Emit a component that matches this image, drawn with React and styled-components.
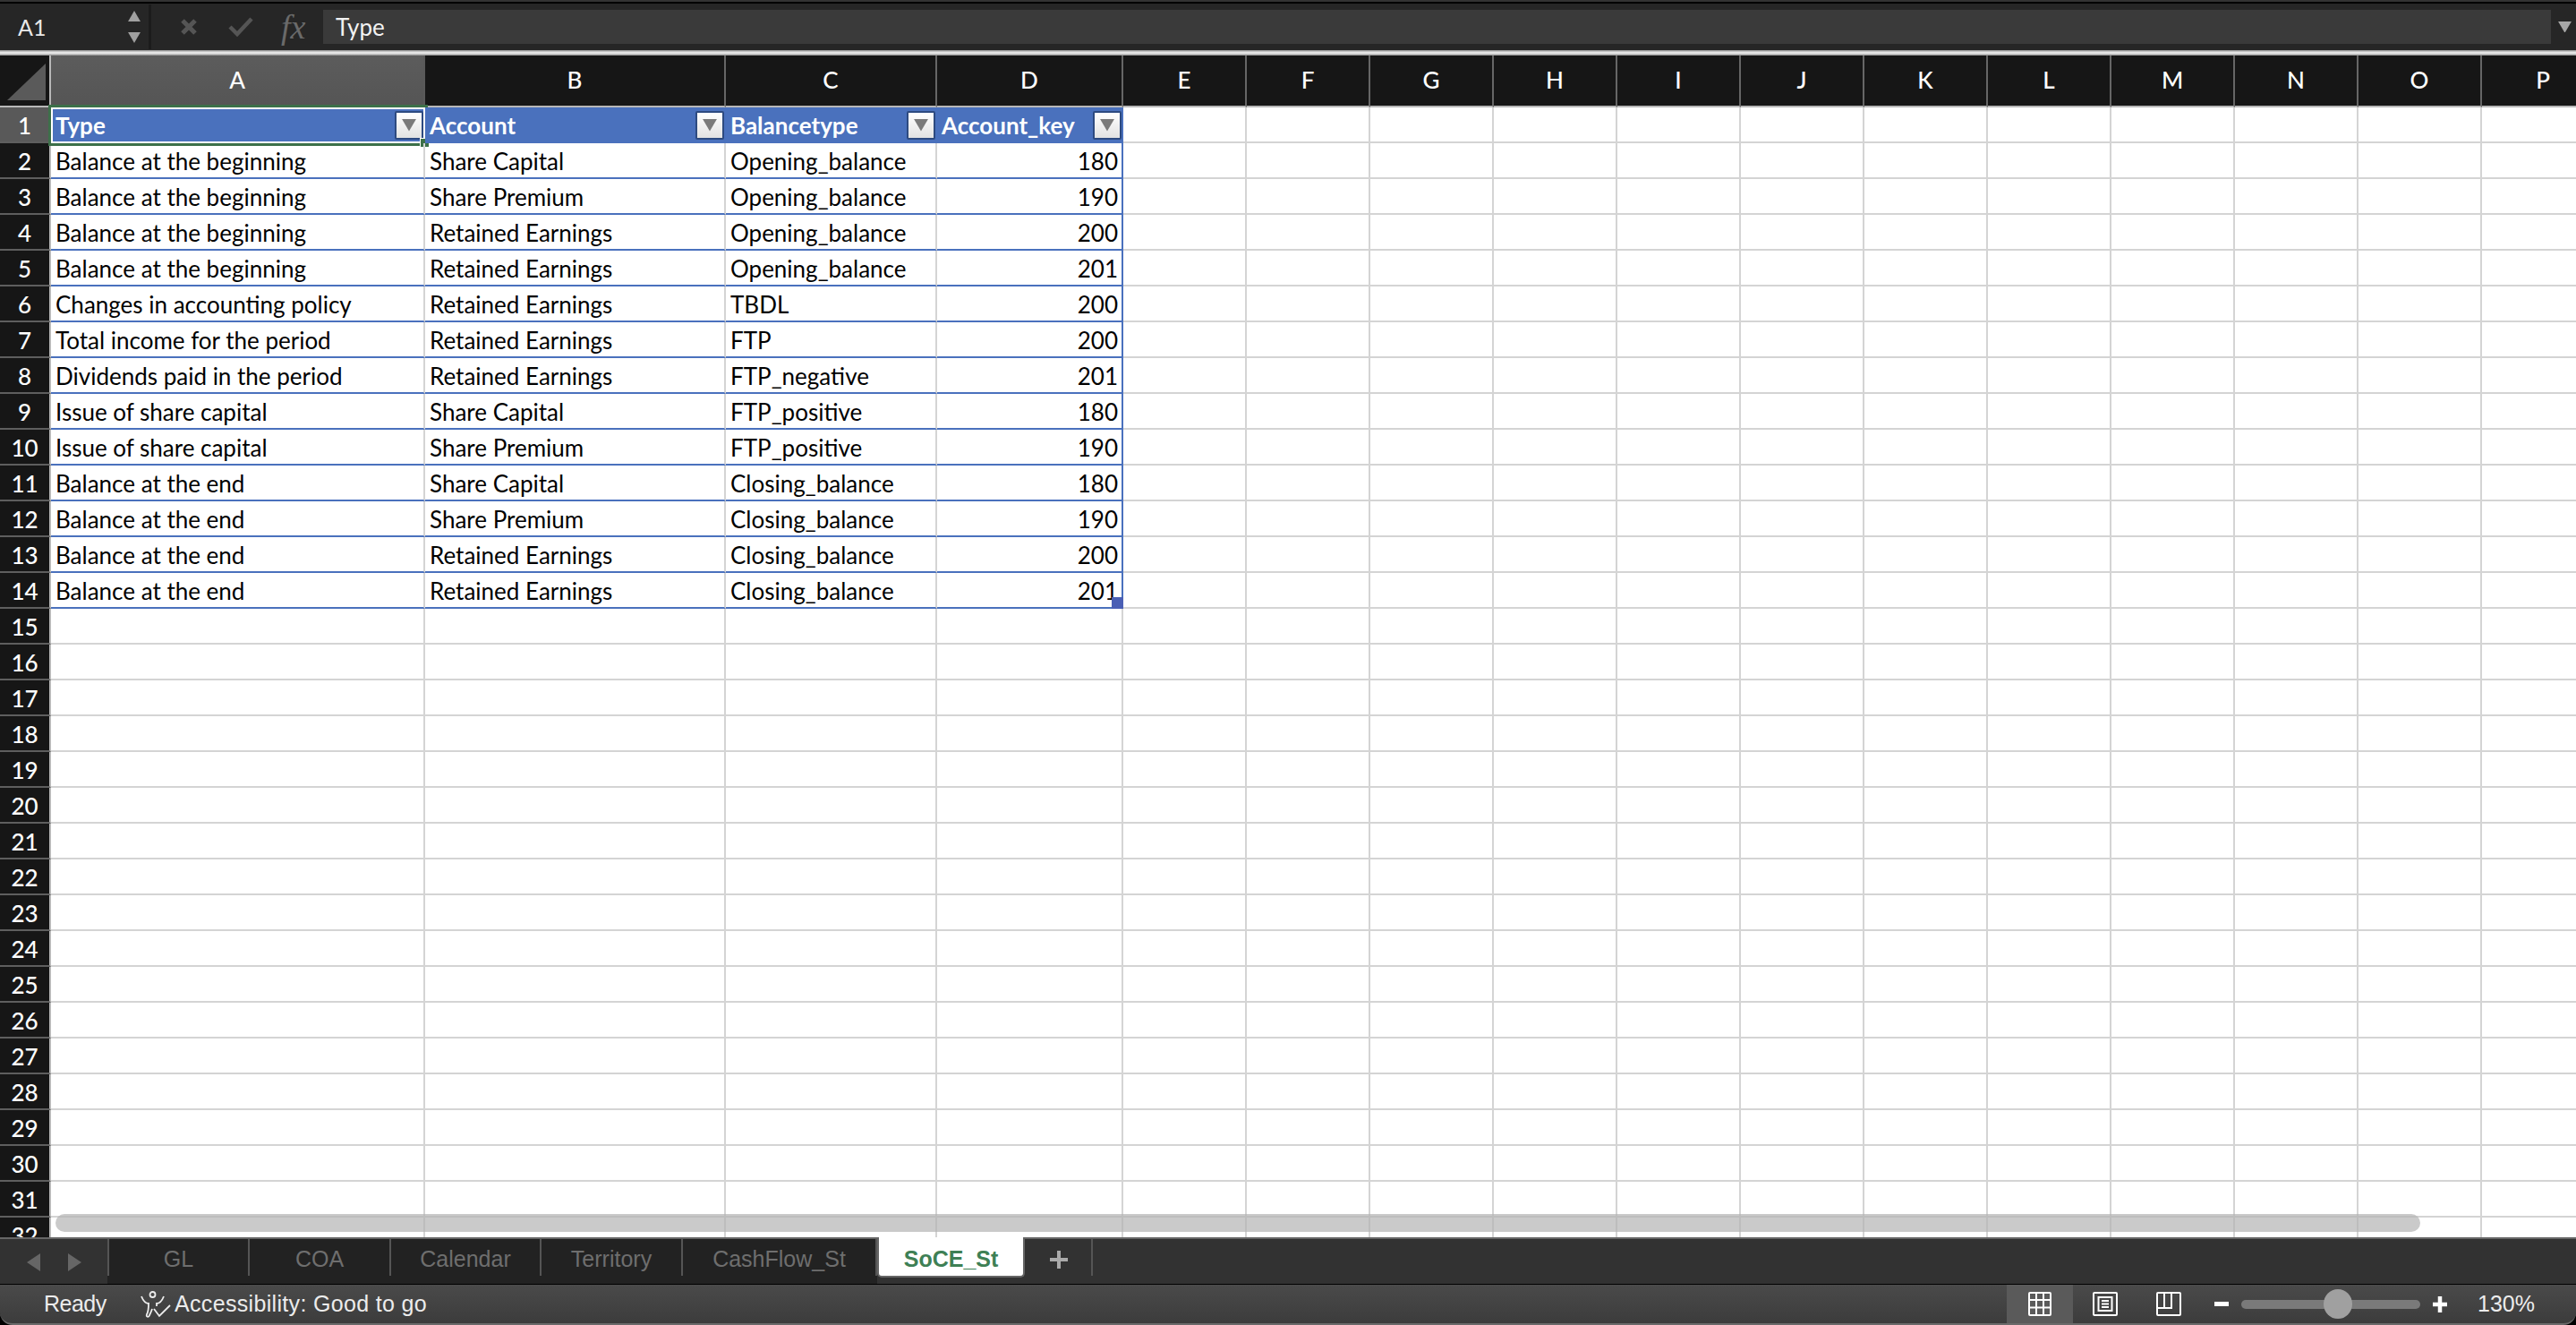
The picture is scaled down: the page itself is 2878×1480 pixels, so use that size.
import React from "react";
import styled, { createGlobalStyle } from "styled-components";

const GlobalStyle = createGlobalStyle`
  html, body {
    margin: 0;
    padding: 0;
    background: #000;
    overflow: hidden;
  }
`;

const COLUMNS = ["A", "B", "C", "D", "E", "F", "G", "H", "I", "J", "K", "L", "M", "N", "O", "P"];
const HEADERS = ["Type", "Account", "Balancetype", "Account_key"];
const ROWS = [
  ["Balance at the beginning", "Share Capital", "Opening_balance", 180],
  ["Balance at the beginning", "Share Premium", "Opening_balance", 190],
  ["Balance at the beginning", "Retained Earnings", "Opening_balance", 200],
  ["Balance at the beginning", "Retained Earnings", "Opening_balance", 201],
  ["Changes in accounting policy", "Retained Earnings", "TBDL", 200],
  ["Total income for the period", "Retained Earnings", "FTP", 200],
  ["Dividends paid in the period", "Retained Earnings", "FTP_negative", 201],
  ["Issue of share capital", "Share Capital", "FTP_positive", 180],
  ["Issue of share capital", "Share Premium", "FTP_positive", 190],
  ["Balance at the end", "Share Capital", "Closing_balance", 180],
  ["Balance at the end", "Share Premium", "Closing_balance", 190],
  ["Balance at the end", "Retained Earnings", "Closing_balance", 200],
  ["Balance at the end", "Retained Earnings", "Closing_balance", 201],
];
const TABS = [
  { name: "GL", width: 159 },
  { name: "COA", width: 158 },
  { name: "Calendar", width: 168 },
  { name: "Territory", width: 158 },
  { name: "CashFlow_St", width: 217 },
];

const Window = styled.div`
  width: 2878px;
  height: 1480px;
  display: flex;
  flex-direction: column;
  background: #000;
  overflow: hidden;
  border-top: 2px solid #333;
  box-sizing: border-box;
`;

/* formula bar */
const FormulaBar = styled.div`
  height: 52px;
  margin-top: 2px;
  display: flex;
  align-items: center;
  background: #262626;
  flex-shrink: 0;
`;
const NameBox = styled.div`
  width: 169px;
  height: 50px;
  box-sizing: border-box;
  padding: 0 9px 0 20px;
  display: flex;
  align-items: center;
  justify-content: space-between;
  color: #e8e8e8;
  font-family: "Lato", sans-serif;
  font-size: 25px;
  border-right: 3px solid #1c1c1c;
`;
const Stepper = styled.div`
  display: flex;
  flex-direction: column;
  gap: 12px;
`;
const FormulaButtons = styled.div`
  width: 192px;
  padding-left: 32px;
  box-sizing: border-box;
  display: flex;
  align-items: center;
  gap: 34px;
`;
const FxLabel = styled.span`
  font-family: "Liberation Serif", serif;
  font-style: italic;
  font-size: 38px;
  color: #6a6a6a;
  margin-left: -3px;
`;
const FormulaInput = styled.div`
  width: 2489px;
  height: 38px;
  padding-left: 14px;
  box-sizing: border-box;
  display: flex;
  align-items: center;
  background: #3a3a3a;
  color: #f2f2f2;
  font-family: "Lato", sans-serif;
  font-size: 26px;
`;
const FormulaChevron = styled.div`
  margin-left: 8px;
  display: flex;
`;
const Splitter = styled.div`
  height: 6px;
  flex-shrink: 0;
  background: linear-gradient(#8c8c8c, #e4e4e4 40%, #e4e4e4 60%, #8c8c8c);
`;

/* sheet */
const Sheet = styled.div`
  position: relative;
  flex: 1;
  min-height: 0;
  overflow: hidden;
  background: #fff;
`;
const Grid = styled.div`
  display: grid;
  grid-template-columns: 57px 418px 336px 236px 208px repeat(12, 138px);
  grid-template-rows: 58px;
  grid-auto-rows: 40px;
  width: 2911px;
  font-family: "Lato", sans-serif;
  font-size: 26px;
  color: #000;
`;
const Corner = styled.div`
  box-sizing: border-box;
  padding: 8px 4px 5px 8px;
  background: #161616;
  border-right: 2px solid #b8b8b8;
  border-bottom: 2px solid #b8b8b8;
  display: flex;
`;
const ColumnHeader = styled.div`
  box-sizing: border-box;
  display: flex;
  align-items: center;
  justify-content: center;
  padding-bottom: 2px;
  color: #fff;
  font-size: 26px;
  font-weight: 500;
  background: ${(p) => (p.$active ? "linear-gradient(#5c5c5c, #555)" : "#161616")};
  border-right: 2px solid ${(p) => (p.$active ? "#595959" : "#666")};
  border-bottom: 2px solid #b8b8b8;
`;
const RowHeader = styled.div`
  box-sizing: border-box;
  display: flex;
  align-items: center;
  justify-content: center;
  padding-top: 2px;
  color: #fff;
  font-size: 26px;
  font-weight: 500;
  background: ${(p) => (p.$active ? "#595959" : "#161616")};
  border-bottom: 2px solid #5e5e5e;
  border-right: 2px solid #b8b8b8;
`;
const Cell = styled.div`
  position: relative;
  box-sizing: border-box;
  min-width: 0;
  display: flex;
  align-items: center;
  justify-content: ${(p) => (p.$number ? "flex-end" : "flex-start")};
  padding: 2px 4px 0 5px;
  white-space: nowrap;
  border-right: 2px solid ${(p) => (p.$edge ? "#4a71bd" : "#d4d4d4")};
  border-bottom: 2px solid ${(p) => (p.$table ? "#4a71bd" : "#d4d4d4")};
`;
const HeaderCell = styled.div`
  position: relative;
  box-sizing: border-box;
  min-width: 0;
  display: flex;
  align-items: center;
  justify-content: space-between;
  padding: 0 2px 0 5px;
  white-space: nowrap;
  background: #4a71bd;
  color: #fff;
  font-weight: 700;
`;
const FilterButton = styled.div`
  width: 32px;
  height: 32px;
  box-sizing: border-box;
  display: flex;
  align-items: center;
  justify-content: center;
  border: 2px solid #2d4a80;
  border-radius: 2px;
  background: linear-gradient(#fff, #e2e2e2);
`;
const Selection = styled.div`
  position: absolute;
  left: -3px;
  top: -3px;
  right: -3px;
  bottom: -3px;
  border: 3px solid #3c7049;
  box-shadow: inset 0 0 0 2px #fff;
  pointer-events: none;
`;
const SelectionHandle = styled.div`
  position: absolute;
  right: -5px;
  bottom: -5px;
  width: 11px;
  height: 11px;
  background: #3c7049;
  border: 1px solid #fff;
  box-sizing: border-box;
`;
const TableHandle = styled.div`
  position: absolute;
  right: -2px;
  bottom: -2px;
  width: 13px;
  height: 13px;
  background: #4a5fb5;
`;
const ScrollThumb = styled.div`
  position: absolute;
  left: 62px;
  top: 1294px;
  width: 2642px;
  height: 20px;
  border-radius: 10px;
  background: rgba(180, 180, 180, 0.7);
`;

/* sheet tabs */
const TabBar = styled.div`
  height: 50px;
  flex-shrink: 0;
  display: flex;
  border-top: 2px solid #666;
  border-bottom: 1px solid #000;
  background: #323232;
  font-family: "Liberation Sans", sans-serif;
  font-size: 25px;
`;
const TabNav = styled.div`
  width: 120px;
  padding-top: 16px;
  height: 34px;
  display: flex;
  justify-content: center;
  gap: 31px;
`;
const TabList = styled.div`
  display: flex;
  background: #222;
`;
const Tab = styled.div`
  width: ${(p) => p.$width}px;
  height: 41px;
  box-sizing: border-box;
  padding-top: 3px;
  display: flex;
  align-items: center;
  justify-content: center;
  color: #6e6e6e;
  border-right: 2px solid #555;
  &:first-child {
    border-left: 2px solid #555;
  }
`;
const ActiveTab = styled.div`
  width: 165px;
  height: 45px;
  margin-top: -2px;
  box-sizing: border-box;
  padding-top: 5px;
  display: flex;
  align-items: center;
  justify-content: center;
  background: #fff;
  color: #3e8055;
  font-weight: 700;
  border: 2px solid #666;
  border-top: 0;
  border-radius: 0 0 5px 5px;
`;
const AddTab = styled.div`
  width: 76px;
  height: 41px;
  box-sizing: border-box;
  padding: 4px 0 0 2px;
  display: flex;
  align-items: center;
  justify-content: center;
  border-right: 2px solid #555;
`;

/* status bar */
const StatusBar = styled.div`
  height: 45px;
  flex-shrink: 0;
  box-sizing: border-box;
  display: flex;
  align-items: center;
  background: linear-gradient(#4a4a4a, #3c3c3c);
  border-bottom: 2px solid #6a6a6a;
  border-radius: 0 0 14px 14px;
  color: #ececec;
  font-family: "Liberation Sans", sans-serif;
  font-size: 25px;
`;
const ReadyText = styled.span`
  margin-left: 49px;
  width: 70px;
  letter-spacing: -0.5px;
`;
const A11yIcon = styled.div`
  margin-left: 38px;
  margin-right: 4px;
  display: flex;
`;
const A11yText = styled.span`
  letter-spacing: 0.33px;
`;
const StatusRight = styled.div`
  margin-left: auto;
  height: 100%;
  display: flex;
  align-items: center;
`;
const ViewButton = styled.div`
  width: ${(p) => p.$width}px;
  height: 100%;
  display: flex;
  align-items: center;
  justify-content: center;
  background: ${(p) => (p.$active ? "#5a5a5a" : "transparent")};
`;
const ZoomControl = styled.div`
  margin-left: 16px;
  display: flex;
  align-items: center;
`;
const ZoomTrack = styled.div`
  position: relative;
  width: 200px;
  height: 10px;
  margin: 0 14px;
  border-radius: 5px;
  background: #7a7a7a;
`;
const ZoomThumb = styled.div`
  position: absolute;
  left: 92px;
  top: -12px;
  width: 32px;
  height: 33px;
  border-radius: 50%;
  background: #a0a0a0;
`;
const ZoomValue = styled.span`
  width: 144px;
  box-sizing: border-box;
  padding-left: 34px;
`;

const Triangle = ({ up, size = 14, color = "#a6a6a6" }) => (
  <svg width={size} height={size * 0.85} viewBox="0 0 14 12">
    <path d={up ? "M7 0L14 12H0Z" : "M0 0H14L7 12Z"} fill={color} />
  </svg>
);

const SideArrow = ({ left }) => (
  <svg width="15" height="20" viewBox="0 0 15 28" preserveAspectRatio="none">
    <path d={left ? "M15 0V28L0 14Z" : "M0 0V28L15 14Z"} fill="#666" />
  </svg>
);

function App() {
  const emptyRows = [];
  for (let r = 15; r <= 32; r++) emptyRows.push(r);

  return (
    <Window>
      <GlobalStyle />
      <FormulaBar>
        <NameBox>
          A1
          <Stepper>
            <Triangle up color="#a0a0a0" />
            <Triangle color="#a0a0a0" />
          </Stepper>
        </NameBox>
        <FormulaButtons>
          <svg width="20" height="20" viewBox="0 0 20 20">
            <path d="M3 3L17 17M17 3L3 17" stroke="#555" strokeWidth="5" />
          </svg>
          <svg width="28" height="22" viewBox="0 0 28 22">
            <path d="M2 11L10 19L26 2" stroke="#555" strokeWidth="4.5" fill="none" />
          </svg>
          <FxLabel>fx</FxLabel>
        </FormulaButtons>
        <FormulaInput>Type</FormulaInput>
        <FormulaChevron>
          <Triangle size={15} color="#a6a6a6" />
        </FormulaChevron>
      </FormulaBar>
      <Splitter />

      <Sheet>
        <Grid>
          <Corner>
            <svg width="45" height="43" viewBox="0 0 45 43">
              <path d="M45 0V43H0Z" fill="#5a5a5a" />
            </svg>
          </Corner>
          {COLUMNS.map((c, i) => (
            <ColumnHeader key={c} $active={i === 0}>
              {c}
            </ColumnHeader>
          ))}

          <RowHeader $active>1</RowHeader>
          {HEADERS.map((h, i) => (
            <HeaderCell key={h}>
              {h}
              <FilterButton>
                <Triangle size={16} color="#7a7a7a" />
              </FilterButton>
              {i === 0 && (
                <Selection>
                  <SelectionHandle />
                </Selection>
              )}
            </HeaderCell>
          ))}
          {COLUMNS.slice(4).map((c) => (
            <Cell key={c} />
          ))}

          {ROWS.map((row, r) => (
            <React.Fragment key={r}>
              <RowHeader>{r + 2}</RowHeader>
              {row.map((v, i) => (
                <Cell key={i} $table $number={i === 3} $edge={i === 3}>
                  {v}
                  {i === 3 && r === ROWS.length - 1 && <TableHandle />}
                </Cell>
              ))}
              {COLUMNS.slice(4).map((c) => (
                <Cell key={c} />
              ))}
            </React.Fragment>
          ))}

          {emptyRows.map((r) => (
            <React.Fragment key={r}>
              <RowHeader>{r}</RowHeader>
              {COLUMNS.map((c) => (
                <Cell key={c} />
              ))}
            </React.Fragment>
          ))}
        </Grid>
        <ScrollThumb />
      </Sheet>

      <TabBar>
        <TabNav>
          <SideArrow left />
          <SideArrow />
        </TabNav>
        <TabList>
          {TABS.map((t) => (
            <Tab key={t.name} $width={t.width}>
              {t.name}
            </Tab>
          ))}
        </TabList>
        <ActiveTab>SoCE_St</ActiveTab>
        <AddTab>
          <svg width="20" height="20" viewBox="0 0 20 20">
            <path d="M10 0V20M0 10H20" stroke="#aaa" strokeWidth="4" />
          </svg>
        </AddTab>
      </TabBar>

      <StatusBar>
        <ReadyText>Ready</ReadyText>
        <A11yIcon>
          <svg width="34" height="30" viewBox="0 0 34 30" fill="none" stroke="#ececec" strokeWidth="1.8">
            <circle cx="13.5" cy="4" r="3" />
            <path d="M1 6C3 11 6 14 9 14C9 20 9 23 7 26C6 29 9 30 10 27C11 25 12 23 13 20" />
            <path d="M26 6C24 11 21 14 18 14V17" />
            <path d="M15 20L21 28L33 16" />
          </svg>
        </A11yIcon>
        <A11yText>Accessibility: Good to go</A11yText>
        <StatusRight>
          <ViewButton $active $width={74}>
            <svg width="26" height="27" viewBox="0 0 26 27" fill="none" stroke="#fff" strokeWidth="2">
              <rect x="1" y="1" width="24" height="25" rx="1" />
              <path d="M9 1V26M17 1V26M1 9H25M1 17.5H25" />
            </svg>
          </ViewButton>
          <ViewButton $width={72}>
            <svg width="28" height="27" viewBox="0 0 28 27" fill="none" stroke="#fff" strokeWidth="2">
              <rect x="1" y="1" width="26" height="25" rx="1" />
              <rect x="6.5" y="6" width="15" height="15" />
              <path d="M10 10H18M10 13.5H18M10 17H18" />
            </svg>
          </ViewButton>
          <ViewButton $width={70}>
            <svg width="28" height="27" viewBox="0 0 28 27" fill="none" stroke="#fff" strokeWidth="2">
              <rect x="1" y="1" width="26" height="25" rx="1" />
              <path d="M1 18H17V1M9 1V18" />
            </svg>
          </ViewButton>
          <ZoomControl>
            <svg width="16" height="6" viewBox="0 0 16 6">
              <rect width="16" height="5" fill="#fff" />
            </svg>
            <ZoomTrack>
              <ZoomThumb />
            </ZoomTrack>
            <svg width="16" height="18" viewBox="0 0 16 18">
              <path d="M8 0V18M0 9H16" stroke="#fff" strokeWidth="4.5" />
            </svg>
          </ZoomControl>
          <ZoomValue>130%</ZoomValue>
        </StatusRight>
      </StatusBar>
    </Window>
  );
}

export default App;
